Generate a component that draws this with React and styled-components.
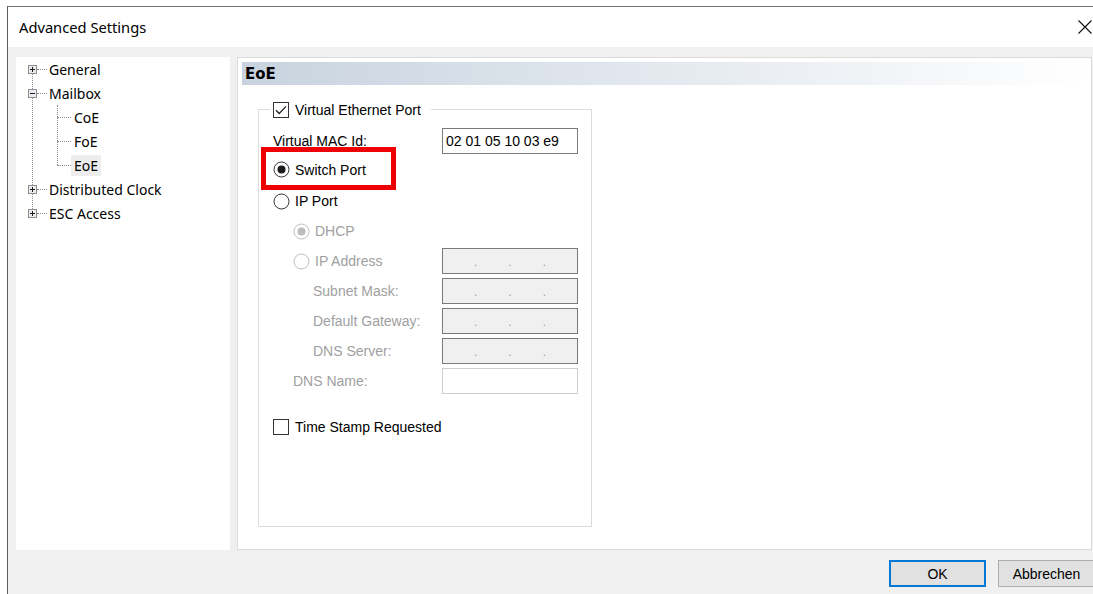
import styled, { createGlobalStyle } from 'styled-components'

const GlobalStyle = createGlobalStyle`
  *, *::before, *::after { box-sizing: border-box; }
  html, body { margin: 0; padding: 0; background: #fff; overflow: hidden; }
  #root { width: 1093px; height: 594px; overflow: hidden; }
`

const Page = styled.div`
  height: 594px;
  padding: 6px 0 0 7px;
  overflow: hidden;
`

const Window = styled.div`
  width: 1093px;
  height: 600px;
  border-top: 1px solid #737373;
  border-left: 1px solid #5c5c5c;
  display: flex;
  flex-direction: column;
  font-family: 'Liberation Sans', Arial, sans-serif;
  font-size: 14px;
  color: #000;
`

const TitleBar = styled.div`
  height: 40px;
  flex: none;
  background: #fff;
  display: flex;
  align-items: center;
  justify-content: space-between;
  padding-left: 11px;
`

const Title = styled.span`
  font-family: 'Noto Sans', 'Open Sans', sans-serif;
  font-size: 14.7px;
`

const CloseButton = styled.div`
  width: 31px;
  height: 40px;
  display: flex;
  align-items: center;
  justify-content: center;
`

const Body = styled.div`
  flex: 1;
  background: #f0f0f0;
  display: flex;
  flex-direction: column;
  padding: 10px 8px 0 8px;
`

const Panels = styled.div`
  height: 493px;
  display: flex;
  gap: 7px;
`

const TreePanel = styled.div`
  width: 214px;
  background: #fff;
  font-family: 'Noto Sans', 'Open Sans', sans-serif;
  font-size: 14px;
`

const ContentPanel = styled.div`
  flex: 1;
  background: #fff;
  border: 1px solid #dcdcdc;
  padding: 4px;
`

const Footer = styled.div`
  display: flex;
  justify-content: flex-end;
  gap: 12px;
  padding-top: 10px;
  margin-right: -3px;
`

const Button = styled.div`
  width: 97px;
  height: 27px;
  display: flex;
  align-items: center;
  justify-content: center;
  background: #e1e1e1;
  border: ${p => (p.$default ? '2px solid #0078d7' : '1px solid #adadad')};
`

/* tree */

const TreeList = styled.ul`
  list-style: none;
  margin: 0;
  padding: 0;
  position: relative;

  &::before {
    content: '';
    position: absolute;
    left: ${p => p.$lineX}px;
    top: ${p => p.$lineTop}px;
    bottom: ${p => p.$lineBottom}px;
    border-left: 1px dotted #8c8c8c;
  }
`

const TreeRow = styled.div`
  height: 24px;
  display: flex;
  align-items: center;
  padding-left: ${p => p.$indent}px;
`

const Connector = styled.span`
  width: ${p => p.$w}px;
  border-top: 1px dotted #8c8c8c;
  flex: none;
`

const NodeLabel = styled.span`
  height: 21px;
  line-height: 21px;
  padding: 0 ${p => p.$pad}px;
  background: ${p => (p.$selected ? '#ededed' : 'transparent')};
  white-space: nowrap;
`

const ExpanderBox = styled.svg`
  position: relative;
  z-index: 1;
  flex: none;
  display: block;
`

function Expander({ open }) {
  return (
    <ExpanderBox width="9" height="9" viewBox="0 0 9 9">
      <rect x="0.5" y="0.5" width="8" height="8" fill="#e9edf2" stroke="#8e8e8e" />
      <path d="M2 4.5h5" stroke="#1c1c1c" />
      {!open && <path d="M4.5 2v5" stroke="#1c1c1c" />}
    </ExpanderBox>
  )
}

const tree = [
  { label: 'General' },
  { label: 'Mailbox', children: ['CoE', 'FoE', 'EoE'] },
  { label: 'Distributed Clock' },
  { label: 'ESC Access' },
]

function Tree() {
  return (
    <TreeList $lineX={16} $lineTop={17} $lineBottom={16}>
      {tree.map(node => (
        <li key={node.label}>
          <TreeRow $indent={12}>
            <Expander open={!!node.children} />
            <Connector $w={10} />
            <NodeLabel $pad={2}>{node.label}</NodeLabel>
          </TreeRow>
          {node.children && (
            <TreeList $lineX={41} $lineTop={0} $lineBottom={12}>
              {node.children.map(child => (
                <li key={child}>
                  <TreeRow $indent={41}>
                    <Connector $w={14} />
                    <NodeLabel $pad={3} $selected={child === 'EoE'}>{child}</NodeLabel>
                  </TreeRow>
                </li>
              ))}
            </TreeList>
          )}
        </li>
      ))}
    </TreeList>
  )
}

/* EoE page */

const PageHeader = styled.div`
  height: 23px;
  display: flex;
  align-items: center;
  padding-left: 3px;
  background: linear-gradient(to right, #c8d3df, #ffffff);
  font-family: 'DejaVu Sans', Verdana, sans-serif;
  font-weight: bold;
  font-size: 15px;
`

const GroupBox = styled.fieldset`
  margin: 16px 0 0 16px;
  width: 334px;
  height: 426px;
  padding: 10px 13px 0 14px;
  border: 1px solid #dcdcdc;
  min-width: 0;
`

const Legend = styled.legend`
  display: flex;
  align-items: center;
  gap: 6px;
  height: 17px;
  margin-left: -3px;
  padding: 0 10px 0 3px;
`

const Stack = styled.div`
  display: flex;
  flex-direction: column;
  gap: 4px;
`

const Row = styled.div`
  height: 26px;
  display: grid;
  grid-template-columns: 1fr 136px;
  align-items: center;
  padding-left: ${p => p.$indent || 0}px;
  margin-top: ${p => p.$gapAbove || 0}px;
`

const Option = styled.span`
  display: inline-flex;
  align-items: center;
  gap: ${p => p.$gap}px;
  color: ${p => (p.$disabled ? '#a0a0a0' : '#000')};
  white-space: nowrap;
`

const Label = styled.span`
  color: ${p => (p.$disabled ? '#a0a0a0' : '#000')};
  white-space: nowrap;
`

const Highlight = styled.span`
  position: relative;
  justify-self: start;

  &::after {
    content: '';
    position: absolute;
    left: -12px;
    top: -14px;
    width: 135px;
    height: 43px;
    border: 5px solid #ee0000;
  }
`

const Field = styled.div`
  height: 26px;
  display: flex;
  align-items: center;
  padding: 0 3px;
  background: #fff;
  border: 1px solid ${p => (p.$disabled ? '#cfcfcf' : '#7a7a7a')};
`

const IpField = styled.div`
  height: 26px;
  display: flex;
  align-items: flex-end;
  justify-content: space-evenly;
  padding-bottom: 4px;
  background: #f0f0f0;
  border: 1px solid #7a7a7a;
  color: #a0a0a0;
  font-size: 12px;
`

function CheckBox({ checked }) {
  return (
    <svg width="16" height="16" viewBox="0 0 16 16" style={{ flex: 'none' }}>
      <rect x="0.5" y="0.5" width="15" height="15" fill="#fff" stroke="#333" />
      {checked && <path d="M3 8.2l3.2 3.3L13 4.4" fill="none" stroke="#222" strokeWidth="1.3" />}
    </svg>
  )
}

function Radio({ checked, disabled }) {
  const tone = disabled ? '#bcbcbc' : '#333'
  return (
    <svg width="17" height="17" viewBox="0 0 17 17" style={{ flex: 'none' }}>
      <circle cx="8.5" cy="8.5" r="7.5" fill="#fff" stroke={tone} />
      {checked && <circle cx="8.5" cy="8.5" r="4" fill={disabled ? '#bcbcbc' : '#1a1a1a'} />}
    </svg>
  )
}

function IpAddress() {
  return (
    <IpField>
      <span>.</span>
      <span>.</span>
      <span>.</span>
    </IpField>
  )
}

const ipRows = ['Subnet Mask:', 'Default Gateway:', 'DNS Server:']

function EoePage() {
  return (
    <>
      <PageHeader>EoE</PageHeader>
      <GroupBox>
        <Legend>
          <CheckBox checked />
          Virtual Ethernet Port
        </Legend>
        <Stack>
          <Row>
            <Label>Virtual MAC Id:</Label>
            <Field>02 01 05 10 03 e9</Field>
          </Row>
          <Row>
            <Highlight>
              <Option $gap={5}>
                <Radio checked />
                Switch Port
              </Option>
            </Highlight>
          </Row>
          <Row>
            <Option $gap={5}>
              <Radio />
              IP Port
            </Option>
          </Row>
          <Row $indent={20}>
            <Option $gap={5} $disabled>
              <Radio checked disabled />
              DHCP
            </Option>
          </Row>
          <Row $indent={20}>
            <Option $gap={5} $disabled>
              <Radio disabled />
              IP Address
            </Option>
            <IpAddress />
          </Row>
          {ipRows.map(label => (
            <Row key={label} $indent={40}>
              <Label $disabled>{label}</Label>
              <IpAddress />
            </Row>
          ))}
          <Row $indent={20}>
            <Label $disabled>DNS Name:</Label>
            <Field $disabled />
          </Row>
          <Row $gapAbove={16}>
            <Option $gap={6}>
              <CheckBox />
              Time Stamp Requested
            </Option>
          </Row>
        </Stack>
      </GroupBox>
    </>
  )
}

export default function App() {
  return (
    <Page>
      <GlobalStyle />
      <Window>
        <TitleBar>
          <Title>Advanced Settings</Title>
          <CloseButton>
            <svg width="14" height="14" viewBox="0 0 14 14">
              <path d="M0.5 0.5L13.5 13.5M13.5 0.5L0.5 13.5" stroke="#111" strokeWidth="1.1" />
            </svg>
          </CloseButton>
        </TitleBar>
        <Body>
          <Panels>
            <TreePanel>
              <Tree />
            </TreePanel>
            <ContentPanel>
              <EoePage />
            </ContentPanel>
          </Panels>
          <Footer>
            <Button $default>OK</Button>
            <Button>Abbrechen</Button>
          </Footer>
        </Body>
      </Window>
    </Page>
  )
}
